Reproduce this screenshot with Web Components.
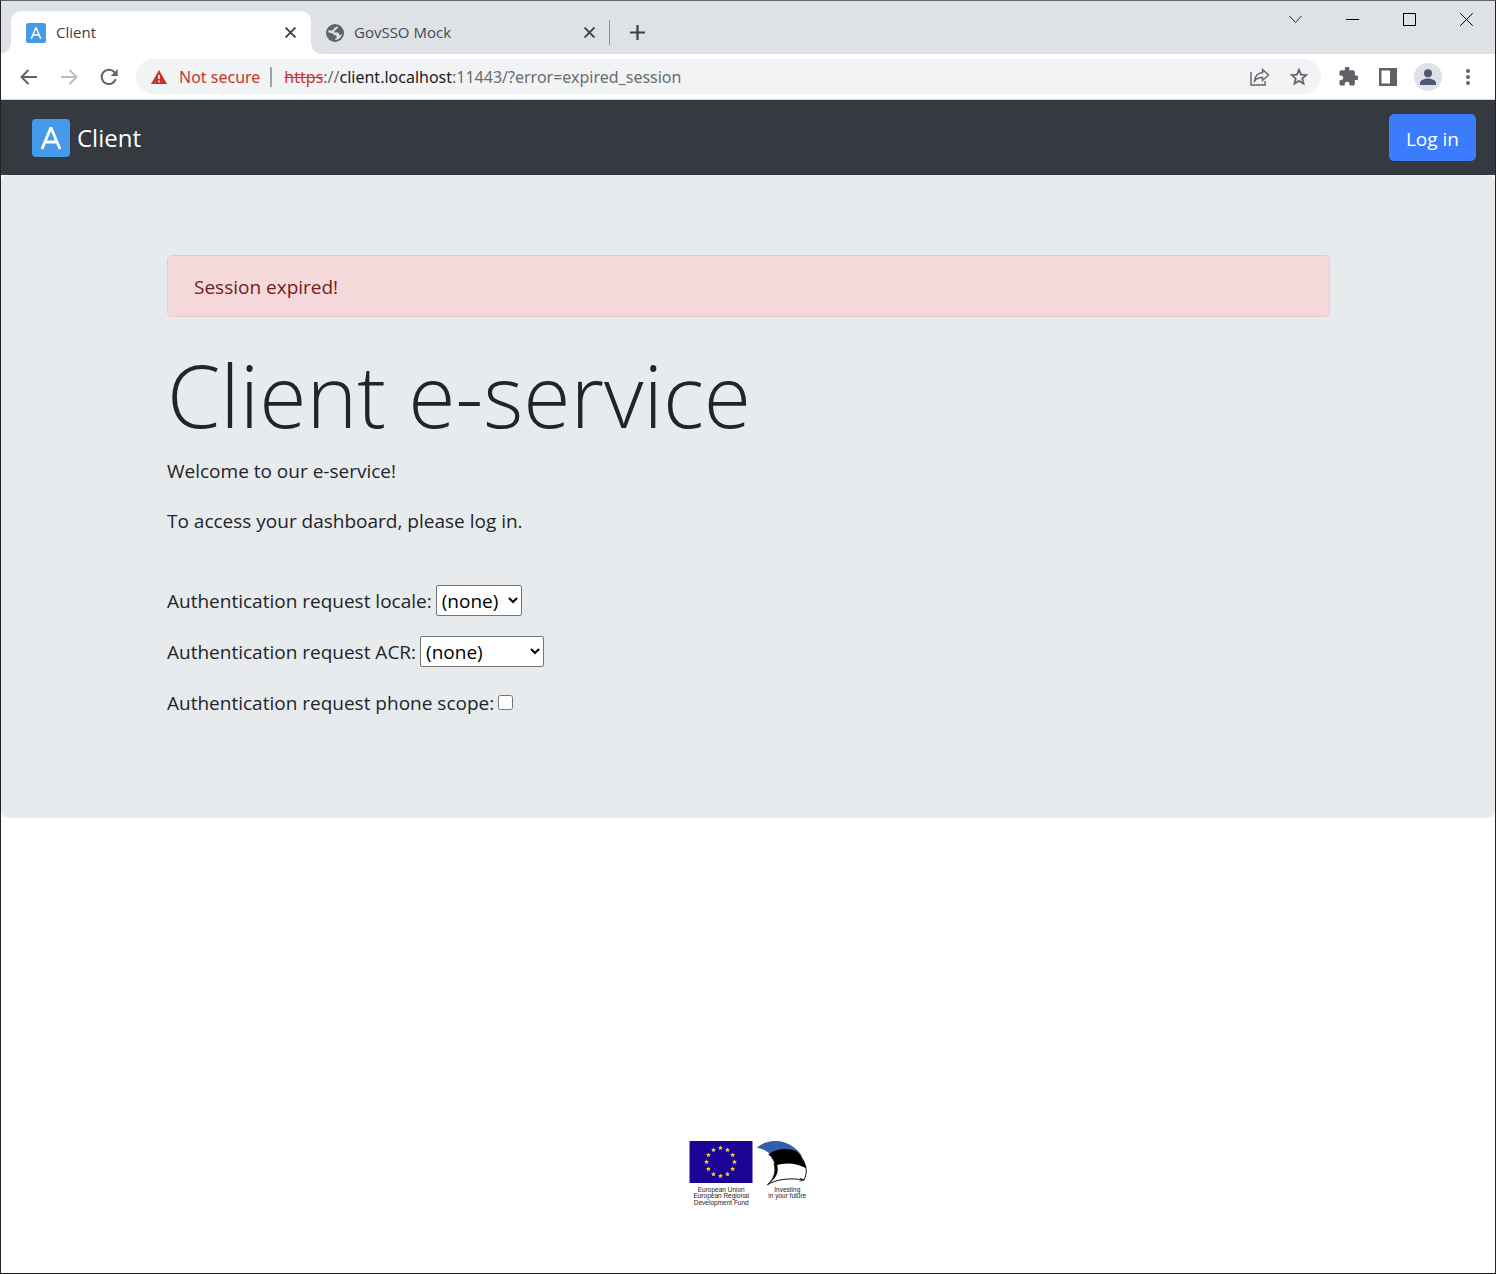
<!DOCTYPE html>
<html lang="en">
<head>
<meta charset="utf-8">
<title>Client</title>
<style>
html, body { margin: 0; height: 100%; }
body { font-family: "Open Sans", "Noto Sans", sans-serif; font-size: 19px; line-height: 30px; color: #212529; background: #fff; }
</style>
</head>
<body>
<browser-window>
  <tab-strip slot="tabs">
    <browser-tab active label="Client"><app-mark slot="icon" style="--size:20px"></app-mark></browser-tab>
    <browser-tab label="GovSSO Mock"><globe-icon slot="icon"></globe-icon></browser-tab>
  </tab-strip>
  <browser-toolbar slot="toolbar">
    <url-text></url-text>
  </browser-toolbar>
  <site-nav>Client</site-nav>
  <hero-panel>
    <alert-box slot="alert">Session expired!</alert-box>
    <span slot="title">Client e-service</span>
    <login-options></login-options>
  </hero-panel>
  <site-footer></site-footer>
</browser-window>

<script>
function define(name, html) {
  const template = document.createElement('template');
  template.innerHTML = '<style>:host,*{box-sizing:border-box}button{font:inherit;color:inherit;background:none;border:0;padding:0;margin:0}svg{display:block;flex:none}</style>' + html;
  customElements.define(name, class extends HTMLElement {
    constructor() {
      super();
      this.attachShadow({ mode: 'open' }).append(template.content.cloneNode(true));
    }
    connectedCallback() {
      const label = this.shadowRoot.querySelector('[data-label]');
      if (label && this.hasAttribute('label')) label.textContent = this.getAttribute('label');
      const ring = this.shadowRoot.querySelector('[data-stars]');
      if (ring && !ring.childElementCount) {
        for (let i = 0; i < 12; i++) {
          const angle = i * Math.PI / 6;
          const star = document.createElementNS('http://www.w3.org/2000/svg', 'polygon');
          const points = [];
          for (let k = 0; k < 10; k++) {
            const r = k % 2 ? 5 : 10, a = k * Math.PI / 5;
            points.push((126 + 56 * Math.sin(angle) + r * Math.sin(a)).toFixed(1) + ',' + (84 - 56 * Math.cos(angle) - r * Math.cos(a)).toFixed(1));
          }
          star.setAttribute('points', points.join(' '));
          ring.append(star);
        }
      }
    }
  });
}

define('app-mark', `
<style>:host{display:block;flex:none}svg{width:var(--size,38px);height:var(--size,38px)}</style>
<svg viewBox="0 0 38 38" aria-hidden="true"><rect width="38" height="38" rx="4" fill="#459aea"/><path d="M10 30 18.900 8.500 28 30M13 23H25" fill="none" stroke="#fff" stroke-width="2.800" stroke-linejoin="bevel"/></svg>`);

define('globe-icon', `
<style>:host{display:block;flex:none}</style>
<svg width="18" height="18" viewBox="0 0 18 18" aria-hidden="true"><circle cx="9" cy="9" r="9" fill="#5f6368"/><path d="M11.200 2.300c1.300 1.400.6 2.500-.8 3-.9.300-.4 1.500-1.700 1.600-.9.100-1 1-.4 1.500h3.200c1.200 0 1.700 1 1.700 2 0 .7.900 1 1.400.7.700-.5 1-1.100 1.400-1.600A7 7 0 0 1 9.200 16v-1.600c1 0 1.600-.8 1.500-1.800-.1-1-.7-1.400-1.700-1.400-1.200 0-1.300-.8-1.800-1.500L2.300 8.200C2.200 10 2 8 2.600 6.300l3.200.2c1 0 1.800-.4 1.900-1.400.1-.9.500-1.200 1.400-1.300z" fill="#dee1e6"/></svg>`);

define('browser-tab', `
<style>
:host{display:flex;align-items:center;gap:10px;width:298px;height:43px;padding:0 14px 0 15px;font-size:15px;line-height:20px;color:#45494d;position:relative}
:host([active]){width:300px;background:#fff;border-radius:10px 10px 0 0;padding-right:15px;color:#3c4043}
:host([active])::before,:host([active])::after{content:"";position:absolute;bottom:0;width:10px;height:10px}
:host([active])::before{right:100%;background:radial-gradient(circle at 0 0,#dee1e6 9px,#fff 10px)}
:host([active])::after{left:100%;background:radial-gradient(circle at 100% 0,#dee1e6 9px,#fff 10px)}
.label{flex:1;white-space:nowrap;padding-bottom:2px}
</style>
<slot name="icon"></slot><span class="label" data-label></span>
<button aria-label="Close tab"><svg width="11" height="11" viewBox="0 0 10 10"><path d="M.5.5l9 9M9.500.5l-9 9" stroke="#3c4043" stroke-width="1.700"/></svg></button>`);

define('tab-strip', `
<style>
:host{display:flex;height:53px;background:#dee1e6;padding-left:10px}
.tabs{display:flex;align-items:center;padding-top:10px}
.rule{width:1px;height:25px;background:#909296}
.new{margin-left:20px}
.controls{display:flex;margin-left:auto;height:37px}
.controls button{width:57px;display:flex;align-items:center;justify-content:center}
</style>
<div class="tabs"><slot></slot><span class="rule"></span>
<button class="new" aria-label="New tab"><svg width="15" height="15" viewBox="0 0 15 15"><path d="M7.500 0v15M0 7.500h15" stroke="#3c4043" stroke-width="2.200"/></svg></button></div>
<div class="controls">
<button aria-label="Search tabs"><svg width="13" height="9" viewBox="0 0 13 9"><path d="M.5 1l6 6.500 6-6.500" fill="none" stroke="#333"/></svg></button>
<button aria-label="Minimize"><svg width="13" height="13" viewBox="0 0 13 13"><path d="M0 6.500h13" stroke="#000"/></svg></button>
<button aria-label="Maximize"><svg width="13" height="13" viewBox="0 0 13 13"><rect x=".5" y=".5" width="12" height="12" fill="none" stroke="#000"/></svg></button>
<button aria-label="Close"><svg width="13" height="13" viewBox="0 0 13 13"><path d="M.3.3l12.400 12.400M12.700.3L.3 12.700" stroke="#000"/></svg></button>
</div>`);

define('url-text', `
<style>:host{display:block;white-space:nowrap;color:#6a6d70}.scheme{color:#c5372c;text-decoration:line-through}.host{color:#202124}</style>
<span role="textbox" aria-label="Address"><span class="scheme">https</span>://<span class="host">client.localhost</span>:11443/?error=expired_session</span>`);

define('browser-toolbar', `
<style>
:host{display:flex;align-items:center;height:46px;padding:0 7px 0 8px;background:#fff;border-bottom:1px solid #d5d7da}
.cell{width:40px;height:35px;display:flex;align-items:center;justify-content:center}
.box{flex:1;display:flex;align-items:center;height:35px;margin:0 7px;padding:0 13px 0 15px;border-radius:18px;background:#f1f3f4;font-family:"Noto Sans","Open Sans",sans-serif;font-size:16px;line-height:24px}
.security{display:flex;align-items:center;gap:12px;color:#c5372c;white-space:nowrap}
.rule{width:2px;height:20px;background:#9fa1a4;margin:0 12px 0 10px}
.actions{display:flex;gap:20px;margin-left:auto}
</style>
<button class="cell" aria-label="Back"><svg width="18" height="16" viewBox="0 0 18 16"><path d="M17 8H2M8.500 1L1.500 8l7 7" fill="none" stroke="#5f6368" stroke-width="2"/></svg></button>
<button class="cell" aria-label="Forward"><svg width="18" height="16" viewBox="0 0 18 16"><path d="M1 8h15M9.500 1l7 7-7 7" fill="none" stroke="#bbbdbf" stroke-width="2"/></svg></button>
<button class="cell" aria-label="Reload"><svg width="18" height="18" viewBox="0 0 18 18"><path d="M15.700 11.200A7.200 7.200 0 1 1 14.500 4.300" fill="none" stroke="#5f6368" stroke-width="2"/><path d="M17.700 1v7h-7z" fill="#5f6368"/></svg></button>
<div class="box">
<button class="security"><svg width="16" height="14" viewBox="0 0 16 14"><path d="M8 0l8 14H0z" fill="#c5372c"/><path d="M8 5v4M8 10.500v1.700" stroke="#f1f3f4" stroke-width="1.700"/></svg><span>Not secure</span></button>
<span class="rule"></span><slot></slot>
<div class="actions">
<button aria-label="Share"><svg width="20" height="18" viewBox="0 0 20 18"><path d="M1 4v13h14v-4M12.500 1.500l6 5.500-6 5.500V9.500C9 9.500 6.500 10.500 4.500 13 5 8.500 8 5 12.500 4.500z" fill="none" stroke="#5f6368" stroke-width="1.400"/></svg></button>
<button aria-label="Bookmark"><svg width="18" height="18" viewBox="2 2 20 20"><path fill="#5f6368" stroke="#5f6368" stroke-width=".4" d="M22 9.240l-7.190-.62L12 2 9.190 8.630 2 9.240l5.460 4.730L5.820 21 12 17.270 18.180 21l-1.630-7.030L22 9.240zM12 15.400l-3.760 2.270 1-4.280-3.320-2.880 4.380-.38L12 6.100l1.710 4.040 4.380.38-3.320 2.880 1 4.280L12 15.400z"/></svg></button>
</div></div>
<button class="cell" aria-label="Extensions"><svg width="19" height="19" viewBox="1.500 1.500 21 21"><path fill="#5f6368" d="M20.500 11H19V7c0-1.100-.9-2-2-2h-4V3.500a2.500 2.500 0 0 0-5 0V5H4c-1.100 0-2 .9-2 2v3.800h1.500a2.700 2.700 0 0 1 0 5.400H2V20c0 1.100.9 2 2 2h3.800v-1.500a2.700 2.700 0 0 1 5.400 0V22H17c1.100 0 2-.9 2-2v-4h1.500a2.500 2.500 0 0 0 0-5z"/></svg></button>
<button class="cell" aria-label="Side panel"><svg width="18" height="18" viewBox="0 0 18 18"><path fill="#5f6368" fill-rule="evenodd" d="M0 0h18v18H0zM2.500 2.500v13h8.500v-13z"/></svg></button>
<button class="cell" aria-label="Profile"><svg width="28" height="28" viewBox="0 0 28 28"><circle cx="14" cy="14" r="14" fill="#dee1e6"/><circle cx="14" cy="10.200" r="4" fill="#4d5970"/><path d="M6 22v-2c0-3 5-4.500 8-4.500s8 1.500 8 4.500v2z" fill="#4d5970"/></svg></button>
<button class="cell" aria-label="Menu"><svg width="4" height="18" viewBox="0 0 4 18"><g fill="#5f6368"><circle cx="2" cy="3" r="2"/><circle cx="2" cy="9" r="2"/><circle cx="2" cy="15" r="2"/></g></svg></button>`);

define('browser-window', `
<style>
:host{display:flex;flex-direction:column;min-height:100%;border:1px solid #222;border-top-color:#63656a;background:#fff}
main{display:flex;flex-direction:column;flex:1}
</style>
<slot name="tabs"></slot><slot name="toolbar"></slot><main><slot></slot></main>`);

define('site-nav', `
<style>
:host{display:flex;align-items:center;justify-content:space-between;height:75px;padding:0 19px 0 31px;background:#343a40;color:#fff}
a{display:flex;align-items:center;gap:7px;color:inherit;text-decoration:none;font-size:24px;line-height:38px}
button{height:47px;padding:2px 17px 0;border-radius:5px;background:#3b7cff;line-height:30px}
</style>
<a href="#"><app-mark></app-mark><slot></slot></a><button>Log in</button>`);

define('alert-box', `
<style>:host{display:block;padding:16px 26px 14px;border:1px solid #f1c6cb;border-radius:5px;background:#f4d8da;color:#721c24}</style><slot></slot>`);

define('hero-panel', `
<style>
:host{display:block;padding:80px 0;background:#e8ebee;border-radius:7px}
.container{max-width:1200px;margin:0 auto;padding:0 18px 0 19px}
h1{margin:24px 0 7px;font-size:86px;line-height:108px;font-weight:300}
p{margin:0 0 20px}
</style>
<div class="container"><slot name="alert"></slot><h1><slot name="title"></slot></h1>
<p>Welcome to our e-service!</p><p>To access your dashboard, please log in.</p><slot></slot></div>`);

define('login-options', `
<style>
:host{display:block;padding:29px 0 20px}
form{display:flex;flex-direction:column;gap:20px}
.row{display:flex;align-items:center;gap:4px}
label{padding-top:2px;line-height:29px}
select{font:inherit;height:31px;margin:0;padding:1px 3px 0 1px;color:#000;background:#fff;border:1px solid #767676;border-radius:2px}
.short{width:86px}.long{width:124px}
input{width:15px;height:15px;margin:0}
</style>
<form>
<div class="row"><label for="locale">Authentication request locale:</label><select id="locale" class="short"><option>(none)</option><option>et</option><option>en</option><option>ru</option></select></div>
<div class="row"><label for="acr">Authentication request ACR:</label><select id="acr" class="long"><option>(none)</option><option>low</option><option>substantial</option><option>high</option></select></div>
<div class="row"><label for="phone">Authentication request phone scope:</label><input id="phone" type="checkbox"></div>
</form>`);

define('site-footer', `
<style>:host{display:flex;justify-content:center;margin-top:auto;padding-bottom:66px}</style>
<svg width="118" height="66" viewBox="0 0 472 264" role="img" aria-label="European Union and Estonia funding emblem">
<rect x="2" width="252" height="168" fill="#1b0396"/><g data-stars fill="#f5d220"></g>
<path d="M271 27C306-5 365-9 407 17c23 14 38 29 47 47-43-33-83-36-133-14C308 38 291 30 271 27z" fill="#315fa8"/>
<path d="M317 53c38-25 80-25 113-12 25 24 39 49 38 68-41-24-84-24-124-10-4-20-12-35-27-46z" fill="#000"/>
<path d="M340 90c9 33 2 58-26 85 33-21 85-29 146-19 11-23 11-41 5-60" fill="none" stroke="#111" stroke-width="4"/>
<path d="M342 92c8 36-2 61-28 83 39-28 47-53 37-85z" fill="#000"/>
<path d="M444 149l16 7-18 5" fill="none" stroke="#111" stroke-width="3"/>
<g font-family="Liberation Sans, sans-serif" font-size="26" fill="#222" text-anchor="middle">
<text x="129" y="203">European Union</text><text x="129" y="229">European Regional</text><text x="129" y="255">Development Fund</text>
<text x="393" y="203">Investing</text><text x="393" y="229">in your future</text></g>
</svg>`);
</script>
</body>
</html>
